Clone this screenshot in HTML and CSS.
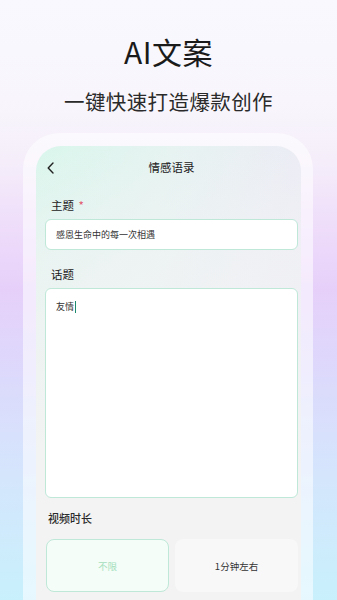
FILE: index.html
```html
<!DOCTYPE html>
<html lang="zh-CN">
<head>
<meta charset="utf-8">
<title>AI文案</title>
<link rel="stylesheet" href="styles.css">
</head>
<body>
<div class="page">
  <header class="hero">
    <h1 class="hero-title">AI文案</h1>
    <p class="hero-sub">一键快速打造爆款创作</p>
  </header>
  <div class="phone">
    <div class="screen">
      <div class="nav">
        <span class="back">
          <svg width="7" height="12" viewBox="0 0 7 12"><path d="M6 1 L1.2 6 L6 11" fill="none" stroke="#222" stroke-width="1.4" stroke-linecap="round" stroke-linejoin="round"/></svg>
        </span>
        <span class="nav-title">情感语录</span>
        <span></span>
      </div>
      <div class="label">主题 <span class="req">*</span></div>
      <div class="input">感恩生命中的每一次相遇</div>
      <div class="label label-2">话题</div>
      <div class="textarea"><span>友情</span><span class="caret"></span></div>
      <div class="section">视频时长</div>
      <div class="options">
        <div class="opt opt-active">不限</div>
        <div class="opt">1分钟左右</div>
      </div>
    </div>
  </div>
</div>
</body>
</html>
```
FILE: styles.css
```css
* { box-sizing: border-box; }
html, body { margin: 0; padding: 0; }
body {
  width: 337px;
  height: 600px;
  overflow: hidden;
  font-family: "Noto Sans CJK SC", "Noto Sans", sans-serif;
  color: #222;
  background: linear-gradient(180deg, #f8f8fe 0px, #f8f6fc 100px, #f5eefa 160px, #eedcfa 230px, #e6d0fa 290px, #dcdafc 380px, #d4e6fc 480px, #c8f0fc 600px);
}
.page { display: flex; flex-direction: column; }
.hero { display: flex; flex-direction: column; align-items: center; padding-top: 31px; }
.hero-title {
  margin: 0;
  font-size: 30px;
  line-height: 40px;
  font-weight: 400;
  color: #1a1a1a;
  letter-spacing: 0.5px;
}
.hero-sub {
  margin: 15px 0 0;
  font-size: 20.5px;
  line-height: 30px;
  font-weight: 400;
  color: #2a2a2a;
  letter-spacing: 0.4px;
}
.phone {
  margin: 17px 24px 0 23px;
  padding: 13px 12px 0 13px;
  border-radius: 36px 36px 0 0;
  background: rgba(255, 255, 255, 0.55);
  height: 480px;
}
.screen {
  height: 100%;
  border-radius: 25px 25px 0 0;
  padding: 0 3px 0 9px;
  background:
    linear-gradient(180deg, rgba(243,243,243,0) 0px, rgba(242,243,244,0.6) 110px, #f3f3f3 330px),
    linear-gradient(105deg, #d9f6ec 0%, #e6f3f1 35%, #ececf5 70%, #e9e8f5 100%);
}
.nav {
  height: 42px;
  display: grid;
  grid-template-columns: 40px 1fr 40px;
  align-items: center;
}
.back { display: flex; align-items: center; padding-left: 2px; padding-top: 1px; }
.back svg { display: block; }
.nav-title {
  text-align: center;
  font-size: 11.5px;
  line-height: 16px;
  color: #222;
}
.label {
  margin: 9px 0 6px;
  padding-left: 6px;
  font-size: 11.5px;
  line-height: 16px;
  color: #222;
}
.label-2 { margin: 16px 0 6px; }
.req { color: #e2566c; margin-left: 2px; }
.input {
  height: 31px;
  border: 1px solid #bfe8d8;
  border-radius: 6px;
  background: #fff;
  padding-left: 10px;
  display: flex;
  align-items: center;
  font-size: 9px;
  color: #333;
}
.textarea {
  height: 210px;
  border: 1px solid #bfe8d8;
  border-radius: 6px;
  background: #fff;
  padding: 11px 10px;
  font-size: 9px;
  line-height: 14px;
  color: #333;
  display: flex;
  align-items: flex-start;
}
.caret {
  display: inline-block;
  width: 1px;
  height: 12px;
  margin-top: 1px;
  margin-left: 1px;
  background: #1c8a6c;
}
.section {
  margin: 12px 0 13px;
  padding-left: 3px;
  font-size: 11px;
  line-height: 16px;
  font-weight: 500;
  color: #2a2a2a;
}
.options {
  display: grid;
  grid-template-columns: 1fr 1fr;
  gap: 6px;
  padding-left: 1px;
}
.opt {
  height: 53px;
  border-radius: 8px;
  background: #f8f8f8;
  display: flex;
  align-items: center;
  justify-content: center;
  font-size: 9.5px;
  color: #333;
}
.opt-active {
  background: #f4fdf8;
  border: 1px solid #bfe8d8;
  color: #a6dfbd;
}
```
